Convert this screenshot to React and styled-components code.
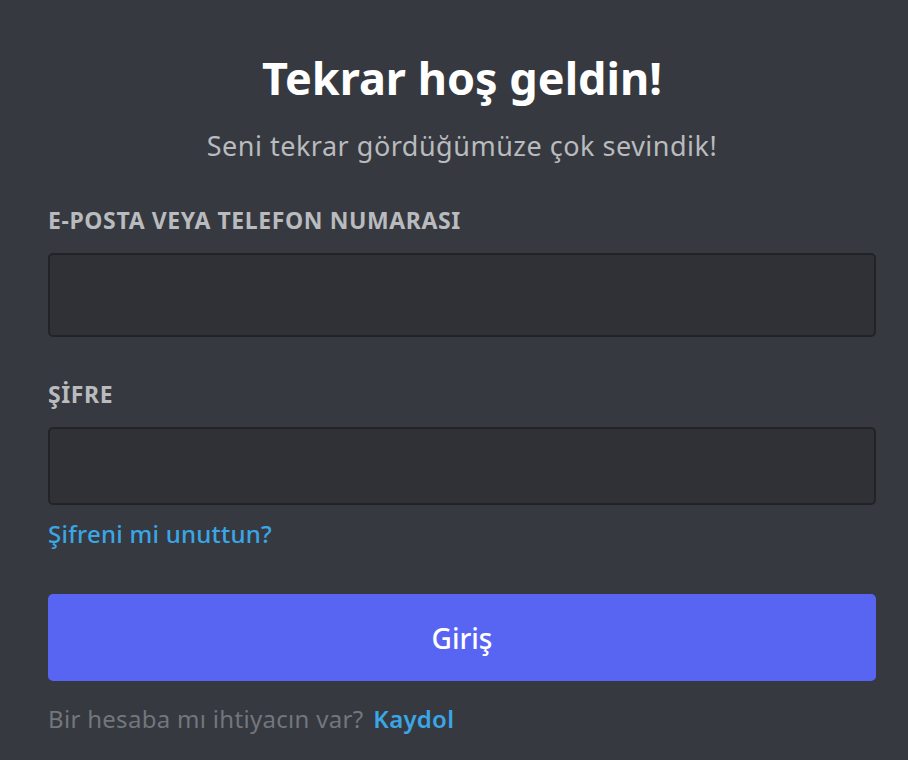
import React from 'react';
import styled, { createGlobalStyle } from 'styled-components';

const GlobalStyle = createGlobalStyle`
  html, body {
    margin: 0;
    padding: 0;
    background: #36393f;
  }
  body {
    font-family: "Noto Sans", "Open Sans", sans-serif;
  }
`;

const Page = styled.div`
  width: 908px;
  height: 760px;
  box-sizing: border-box;
  padding: 50px 32px 0 48px;
  background: #36393f;
  overflow: hidden;
`;

const Header = styled.div`
  display: flex;
  flex-direction: column;
  align-items: center;
`;

const Title = styled.h1`
  margin: 0;
  font-size: 45px;
  line-height: 56px;
  font-weight: 700;
  color: #ffffff;
`;

const Subtitle = styled.div`
  margin-top: 22px;
  font-size: 27px;
  line-height: 36px;
  letter-spacing: 0.5px;
  color: #b9bbbe;
`;

const Form = styled.form`
  display: flex;
  flex-direction: column;
  margin-top: 42px;
`;

const Field = styled.div`
  display: flex;
  flex-direction: column;
  margin-bottom: ${p => p.$gap || 0}px;
`;

const Label = styled.label`
  font-size: 23px;
  line-height: 28px;
  font-weight: 700;
  letter-spacing: 0.6px;
  color: #b9bbbe;
  margin-bottom: 19px;
`;

const Input = styled.input`
  box-sizing: border-box;
  width: 100%;
  height: ${p => p.$h}px;
  background: #303136;
  border: 2px solid #222327;
  border-radius: 5px;
  outline: none;
  color: #dcddde;
  font-size: 22px;
  padding: 0 16px;
`;

const Link = styled.a`
  color: #3ba6e6;
  font-size: 24px;
  line-height: 32px;
  font-weight: 500;
  letter-spacing: 0.25px;
  text-decoration: none;
  cursor: pointer;
`;

const Forgot = styled(Link)`
  margin-top: 13px;
  align-self: flex-start;
`;

const Button = styled.button`
  margin-top: 44px;
  height: 87px;
  border: none;
  border-radius: 5px;
  background: #5865f2;
  color: #ffffff;
  font-family: inherit;
  font-size: 28px;
  font-weight: 500;
  cursor: pointer;
`;

const Footer = styled.div`
  margin-top: 22px;
  font-size: 24px;
  line-height: 32px;
  letter-spacing: 0.3px;
  color: #72767d;
`;

const Signup = styled(Link)`
  margin-left: 10px;
  font-weight: 600;
`;

export default function App() {
  return (
    <>
      <GlobalStyle />
      <Page>
        <Header>
          <Title>Tekrar hoş geldin!</Title>
          <Subtitle>Seni tekrar gördüğümüze çok sevindik!</Subtitle>
        </Header>
        <Form onSubmit={e => e.preventDefault()}>
          <Field $gap={43}>
            <Label>E-POSTA VEYA TELEFON NUMARASI</Label>
            <Input type="text" $h={84} />
          </Field>
          <Field>
            <Label>ŞİFRE</Label>
            <Input type="password" $h={78} />
          </Field>
          <Forgot>Şifreni mi unuttun?</Forgot>
          <Button type="submit">Giriş</Button>
          <Footer>
            Bir hesaba mı ihtiyacın var?<Signup>Kaydol</Signup>
          </Footer>
        </Form>
      </Page>
    </>
  );
}
